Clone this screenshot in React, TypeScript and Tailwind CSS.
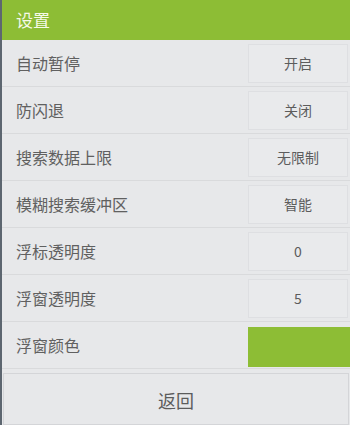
import React from "react";

const rows: { label: string; value?: string; color?: boolean }[] = [
  { label: "自动暂停", value: "开启" },
  { label: "防闪退", value: "关闭" },
  { label: "搜索数据上限", value: "无限制" },
  { label: "模糊搜索缓冲区", value: "智能" },
  { label: "浮标透明度", value: "0" },
  { label: "浮窗透明度", value: "5" },
  { label: "浮窗颜色", color: true },
];

export default function App() {
  return (
    <div
      className="w-[350px] h-[425px] bg-[#e7e8ea] border-l-2 border-[#5d6670] overflow-hidden flex flex-col"
      style={{ fontFamily: '"Noto Sans CJK SC", "Noto Sans", sans-serif' }}
    >
      <div className="h-[40px] bg-[#8dbd35] flex items-center pl-[14px] text-[17px] text-[#f6f9e8]">
        设置
      </div>
      {rows.map((r) => (
        <div
          key={r.label}
          className="h-[47px] flex items-center border-b border-[#d9dadc] pl-[14px]"
        >
          <span className="flex-1 text-[16px] text-[#606060]">{r.label}</span>
          {r.color ? (
            <div className="w-[102px] h-[40px] mt-[3px] bg-[#8dbd35]" />
          ) : (
            <div className="w-[100px] h-[39px] mr-[2px] border border-[#dedfe2] bg-[#e9eaec] flex items-center justify-center text-[14px] text-[#5c5c5c]">
              {r.value}
            </div>
          )}
        </div>
      ))}
      <div className="mt-[4px] mx-[1px] flex-1 border border-[#d4d5d8] flex items-center justify-center pt-[3px] text-[18px] text-[#5c5c5c]">
        返回
      </div>
    </div>
  );
}
